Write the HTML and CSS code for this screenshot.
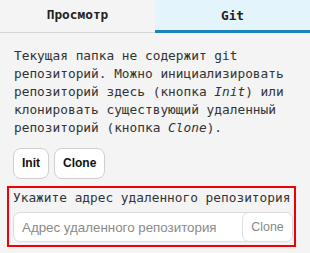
FILE: index.html
```html
<!DOCTYPE html>
<html lang="ru">
<head>
<meta charset="utf-8">
<link rel="stylesheet" href="styles.css">
</head>
<body>
<div class="tabs">
  <div class="tab">Просмотр</div>
  <div class="tab active">Git</div>
</div>
<div class="content">
  <p class="info">Текущая папка не содержит git репозиторий. Можно инициализировать репозиторий здесь (кнопка <em>Init</em>) или клонировать существующий удаленный репозиторий (кнопка <em>Clone</em>).</p>
  <div class="actions">
    <button class="btn">Init</button>
    <button class="btn">Clone</button>
  </div>
  <div class="clone-box">
    <div class="label">Укажите адрес удаленного репозитория</div>
    <div class="field">
      <input class="url" type="text" placeholder="Адрес удаленного репозитория">
      <button class="inner-btn">Clone</button>
    </div>
  </div>
</div>
</body>
</html>
```
FILE: styles.css
```css
html, body {
  margin: 0;
  padding: 0;
  background: #f4f4f4;
}
body {
  font-family: "DejaVu Sans Mono", monospace;
  font-size: 12.8px;
  color: #333;
}
.tabs {
  display: flex;
  height: 32px;
  border-bottom: 1px solid #d6d6d6;
}
.tab {
  flex: 1;
  display: flex;
  align-items: center;
  justify-content: center;
  font-weight: bold;
  color: #222;
  box-sizing: border-box;
  padding-bottom: 3px;
}
.tab.active {
  background: #e4f4fc;
  border-bottom: 3px solid #1a84bb;
  height: 33px;
  padding-bottom: 0;
}
.content {
  padding: 14px 7px 0 7px;
}
.info {
  margin: 0 7px;
  line-height: 17.9px;
}
.info em {
  font-style: italic;
}
.actions {
  display: flex;
  gap: 5px;
  margin: 11px 6px 0 6px;
}
.btn {
  font-family: "Liberation Sans", Arial, sans-serif;
  font-weight: bold;
  font-size: 12px;
  color: #111;
  background: #fff;
  border: 1px solid #cfcfcf;
  border-radius: 8px;
  height: 31px;
  padding: 0 8px;
}
.clone-box {
  margin-top: 7px;
  border: 2px solid #f00000;
  width: 289px;
  box-sizing: border-box;
  height: 61px;
  padding: 1px 0 0 4px;
}
.label {
  line-height: 17.9px;
  color: #333;
}
.field {
  display: flex;
  margin-top: 6px;
  width: 280px;
  height: 30px;
  background: #fff;
  border: 1px solid #dcdcdc;
  border-radius: 7px;
  box-sizing: border-box;
  overflow: hidden;
}
.url {
  flex: 1;
  min-width: 0;
  border: none;
  outline: none;
  background: transparent;
  font-family: "Liberation Sans", Arial, sans-serif;
  font-size: 13.33px;
  padding: 0 0 0 8px;
  color: #333;
}
.url::placeholder {
  color: #8a8a8a;
}
.inner-btn {
  font-family: "Liberation Sans", Arial, sans-serif;
  font-size: 12.4px;
  color: #888;
  background: #fff;
  border: 1px solid #dcdcdc;
  border-radius: 7px;
  margin: -1px -1px -1px 0;
  width: 51px;
  padding: 0;
}
```
